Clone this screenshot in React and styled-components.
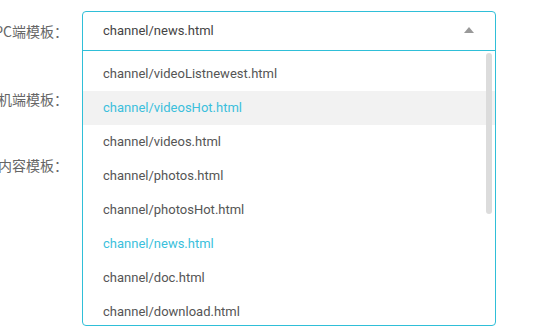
import React from 'react';
import styled, { createGlobalStyle } from 'styled-components';

const GlobalStyle = createGlobalStyle`
    html, body {
        margin: 0;
        padding: 0;
        background: #fff;
    }
`;

const CYAN = '#2fbfd8';
const OPTIONS = [
    'channel/videoListnewest.html',
    'channel/videosHot.html',
    'channel/videos.html',
    'channel/photos.html',
    'channel/photosHot.html',
    'channel/news.html',
    'channel/doc.html',
    'channel/download.html',
    'channel/special.html',
    'channel/topic.html',
    'channel/list.html',
    'channel/index.html',
    'channel/about.html'
];

const Page = styled.div`
    width: 548px;
    height: 326px;
    overflow: hidden;
`;

const Form = styled.div`
    padding-top: 11px;
    margin-left: -22px;
    width: 570px;
    font-family: "Noto Sans CJK SC", "Liberation Sans", sans-serif;
`;

const Row = styled.div`
    display: flex;
    align-items: center;
    height: 40px;
    margin-bottom: ${props => props.gap || 0}px;
    position: relative;
`;

const Label = styled.div`
    width: 90px;
    flex: none;
    display: flex;
    justify-content: flex-end;
    white-space: nowrap;
    font-size: 14px;
    color: #666;
    margin-right: 14px;
    overflow: hidden;
`;

const Select = styled.div`
    position: relative;
    width: 414px;
    height: 40px;
    box-sizing: border-box;
`;

const Dropdown = styled.div`
    position: absolute;
    top: 0;
    left: 0;
    width: 414px;
    height: 315px;
    box-sizing: border-box;
    border: 1px solid ${CYAN};
    border-radius: 4px;
    background: #fff;
    z-index: 5;
    display: flex;
    flex-direction: column;
    overflow: hidden;
    font-family: Roboto, "Liberation Sans", sans-serif;
`;

const Head = styled.div`
    height: 39px;
    flex: none;
    box-sizing: border-box;
    border-bottom: 1px solid ${CYAN};
    display: flex;
    align-items: center;
    justify-content: space-between;
    padding: 0 21px 2px 20px;
    font-size: 13px;
    color: #444;
`;

const Caret = styled.span`
    width: 0;
    height: 0;
    border-left: 5px solid transparent;
    border-right: 5px solid transparent;
    border-bottom: 6px solid #999;
`;

const List = styled.div`
    position: relative;
    flex: 1;
    overflow: hidden;
    padding-top: 6px;
`;

const Item = styled.div`
    height: 34px;
    box-sizing: border-box;
    display: flex;
    align-items: center;
    padding: 0 0 2px 20px;
    font-size: 13px;
    color: ${props => (props.active ? '#3bbfdc' : '#555')};
    background: ${props => (props.hover ? '#f2f2f2' : 'transparent')};
`;

const Thumb = styled.div`
    position: absolute;
    top: 2px;
    right: 3px;
    width: 6px;
    height: 161px;
    border-radius: 3px;
    background: #dcdcdc;
`;

export default function App() {
    return (
        <Page>
            <GlobalStyle />
            <Form>
                <Row gap={28}>
                    <Label>PC端模板：</Label>
                    <Select>
                        <Dropdown>
                            <Head>
                                <span>channel/news.html</span>
                                <Caret />
                            </Head>
                            <List>
                                {OPTIONS.map((opt, i) => (
                                    <Item
                                        key={opt}
                                        hover={i === 1}
                                        active={i === 1 || opt === 'channel/news.html'}
                                    >
                                        {opt}
                                    </Item>
                                ))}
                                <Thumb />
                            </List>
                        </Dropdown>
                    </Select>
                </Row>
                <Row gap={26}>
                    <Label>手机端模板：</Label>
                </Row>
                <Row>
                    <Label>内容模板：</Label>
                </Row>
            </Form>
        </Page>
    );
}
